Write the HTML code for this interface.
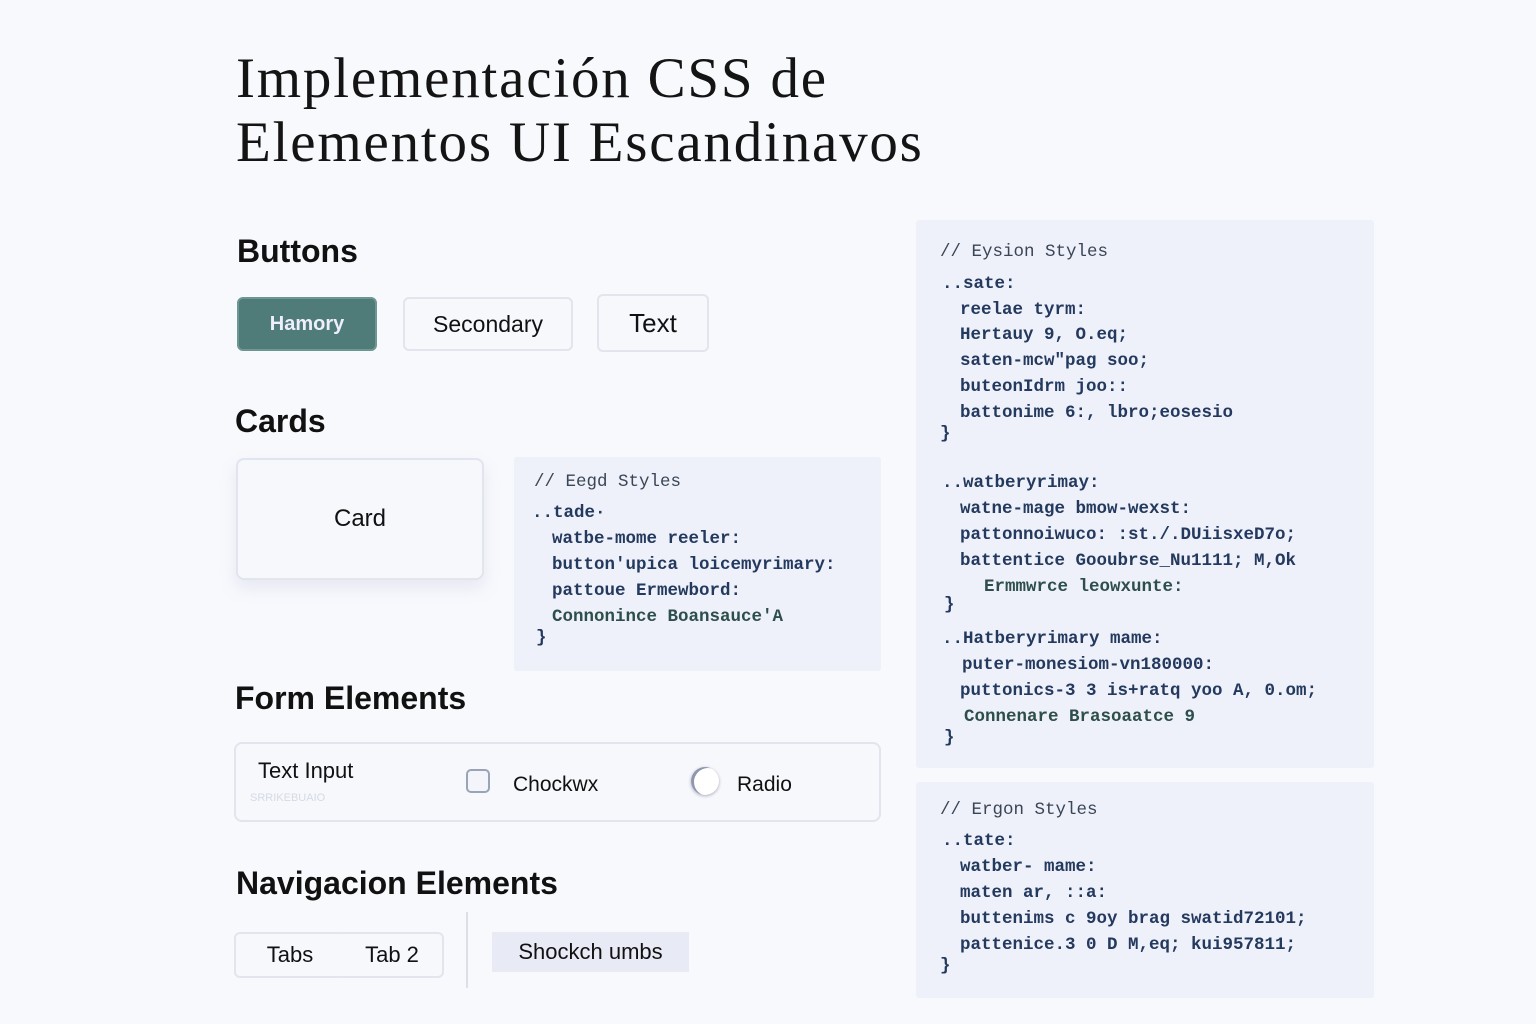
<!DOCTYPE html>
<html><head><meta charset="utf-8"><style>
body{margin:0;width:1536px;height:1024px;background:#f8f9fd;position:relative;overflow:hidden;font-family:"Liberation Sans",sans-serif;color:#111}
.a{position:absolute}
h1{position:absolute;left:236px;top:47px;margin:0;font:400 57px/64px "Liberation Serif",serif;color:#141414;letter-spacing:1.8px}
.h{position:absolute;font-weight:700;font-size:32px;color:#111;letter-spacing:0}
.btn{position:absolute;box-sizing:border-box;border:2px solid #e2e4ee;border-radius:6px;background:#f7f8fc;display:flex;align-items:center;justify-content:center;font-size:23px;color:#111}
.code{position:absolute;background:#eef1f9;border-radius:3px;font-family:"Liberation Mono","DejaVu Sans Mono",monospace;font-size:17.5px;color:#24395e;white-space:pre;font-weight:600}
.code div{position:absolute;left:0}
.c{color:#3a4556;font-weight:400}
.g{color:#2d4e4a}
</style></head><body>
<h1>Implementación CSS de<br>Elementos UI Escandinavos</h1>

<div class="h" style="left:237px;top:233px">Buttons</div>
<div class="btn" style="left:237px;top:297px;width:140px;height:54px;background:#4f7b78;border-color:#6e9693;color:#eef;font-weight:700;font-size:20px">Hamory</div>
<div class="btn" style="left:403px;top:297px;width:170px;height:54px">Secondary</div>
<div class="btn" style="left:597px;top:294px;width:112px;height:58px;font-size:26px">Text</div>

<div class="h" style="left:235px;top:403px">Cards</div>
<div class="btn" style="left:236px;top:458px;width:248px;height:122px;border-radius:8px;font-size:24px;box-shadow:0 8px 16px rgba(180,185,210,.25)">Card</div>

<div class="code" style="left:514px;top:457px;width:367px;height:214px">
<div class="c" style="left:20px;top:15px">// Eegd Styles</div>
<div style="left:18px;top:46px">..tade·</div>
<div style="left:38px;top:72px">watbe-mome reeler:</div>
<div style="left:38px;top:98px">button'upica loicemyrimary:</div>
<div style="left:38px;top:124px">pattoue Ermewbord:</div>
<div class="g" style="left:38px;top:150px">Connonince Boansauce'A</div>
<div style="left:22px;top:171px">}</div>
</div>

<div class="h" style="left:235px;top:680px">Form Elements</div>
<div class="btn" style="left:234px;top:742px;width:647px;height:80px;border-radius:8px;display:block">
<div class="a" style="left:22px;top:14px;font-size:22px">Text Input</div>
<div class="a" style="left:14px;top:48px;font-size:11px;color:#d6d9e6">SRRIKEBUAIO</div>
<div class="a" style="left:230px;top:25px;width:24px;height:24px;border:2px solid #9ba3b8;border-radius:5px;box-sizing:border-box;background:#f4f5fa"></div>
<div class="a" style="left:277px;top:29px;font-size:21px">Chockwx</div>
<div class="a" style="left:455px;top:23px;width:28px;height:28px;border-radius:50%;background:#fff;box-shadow:inset 3px 1px 0 #8e97ad,0 1px 3px #aab"></div>
<div class="a" style="left:501px;top:29px;font-size:21px">Radio</div>
</div>

<div class="h" style="left:236px;top:865px">Navigacion Elements</div>
<div class="btn" style="left:234px;top:932px;width:112px;height:46px;font-size:22px">Tabs</div>
<div class="btn" style="left:342px;top:932px;width:102px;height:46px;font-size:22px;border-left:none;border-radius:0 6px 6px 0">Tab 2</div>
<div class="a" style="left:466px;top:912px;width:2px;height:76px;background:#dcdfe8"></div>
<div class="a" style="left:492px;top:932px;width:197px;height:40px;background:#e8eaf5;font-size:22px;display:flex;align-items:center;justify-content:center">Shockch umbs</div>

<div class="code" style="left:916px;top:220px;width:458px;height:548px">
<div class="c" style="left:24px;top:22px">// Eysion Styles</div>
<div style="left:26px;top:54px">..sate:</div>
<div style="left:44px;top:80px">reelae tyrm:</div>
<div style="left:44px;top:105px">Hertauy 9, O.eq;</div>
<div style="left:44px;top:131px">saten-mcw"pag soo;</div>
<div style="left:44px;top:157px">buteonIdrm joo::</div>
<div style="left:44px;top:183px">battonime 6:, lbro;eosesio</div>
<div style="left:24px;top:204px">}</div>
<div style="left:26px;top:253px">..watberyrimay:</div>
<div style="left:44px;top:279px">watne-mage bmow-wexst:</div>
<div style="left:44px;top:305px">pattonnoiwuco: :st./.DUiisxeD7o;</div>
<div style="left:44px;top:331px">battentice Gooubrse_Nu1111; M,Ok</div>
<div class="g" style="left:68px;top:357px">Ermmwrce leowxunte:</div>
<div style="left:28px;top:375px">}</div>
<div style="left:26px;top:409px">..Hatberyrimary mame:</div>
<div style="left:46px;top:435px">puter-monesiom-vn180000:</div>
<div style="left:44px;top:461px">puttonics-3 3 is+ratq yoo A, 0.om;</div>
<div class="g" style="left:48px;top:487px">Connenare Brasoaatce 9</div>
<div style="left:28px;top:508px">}</div>
</div>

<div class="code" style="left:916px;top:782px;width:458px;height:216px">
<div class="c" style="left:24px;top:18px">// Ergon Styles</div>
<div style="left:26px;top:49px">..tate:</div>
<div style="left:44px;top:75px">watber- mame:</div>
<div style="left:44px;top:101px">maten ar, ::a:</div>
<div style="left:44px;top:127px">buttenims c 9oy brag swatid72101;</div>
<div style="left:44px;top:153px">pattenice.3 0 D M,eq; kui957811;</div>
<div style="left:24px;top:174px">}</div>
</div>
</body></html>
